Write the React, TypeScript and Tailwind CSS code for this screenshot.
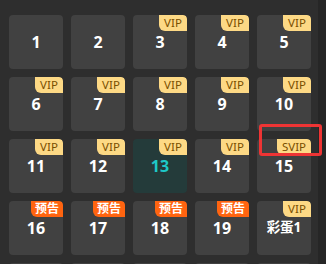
import React from "react";

type Cell = { label: string; badge?: "VIP" | "SVIP" | "预告"; active?: boolean; small?: boolean };

const cells: Cell[] = [
  { label: "1" },
  { label: "2" },
  { label: "3", badge: "VIP" },
  { label: "4", badge: "VIP" },
  { label: "5", badge: "VIP" },
  { label: "6", badge: "VIP" },
  { label: "7", badge: "VIP" },
  { label: "8", badge: "VIP" },
  { label: "9", badge: "VIP" },
  { label: "10", badge: "VIP" },
  { label: "11", badge: "VIP" },
  { label: "12", badge: "VIP" },
  { label: "13", badge: "VIP", active: true },
  { label: "14", badge: "VIP" },
  { label: "15", badge: "SVIP" },
  { label: "16", badge: "预告" },
  { label: "17", badge: "预告" },
  { label: "18", badge: "预告" },
  { label: "19", badge: "预告" },
  { label: "彩蛋1", badge: "VIP", small: true },
  { label: "" },
  { label: "" },
  { label: "" },
  { label: "" },
  { label: "" },
];

function Badge({ kind }: { kind: "VIP" | "SVIP" | "预告" }) {
  if (kind === "预告") {
    return (
      <div className="absolute top-0 right-0 h-[16px] w-[32px] rounded-tr-[4px] rounded-bl-[6px] bg-[#ff6410] text-white text-[12px] font-bold leading-[16px] text-center">
        预告
      </div>
    );
  }
  return (
    <div
      className={
        "absolute top-0 right-0 h-[16px] rounded-tr-[4px] rounded-bl-[6px] bg-[#fdd985] text-[#7a4f00] text-[11.5px] leading-[16px] text-center " +
        (kind === "SVIP" ? "w-[34px]" : "w-[28px]")
      }
    >
      {kind}
    </div>
  );
}

export default function App() {
  return (
    <div
      className="relative w-[326px] h-[264px] overflow-hidden bg-[#2e2e2e] flex"
      style={{ fontFamily: '"Noto Sans", "Noto Sans CJK SC", sans-serif' }}
    >
      <div className="flex-1 pl-[9px] pt-[15px]">
        <div className="grid grid-cols-[repeat(5,54px)] auto-rows-[54px] gap-[8px]">
          {cells.map((c, i) => (
            <div
              key={i}
              className={
                "relative rounded-[4px] flex items-center justify-center overflow-hidden " +
                (c.active ? "bg-[#243b3a]" : "bg-[#414141]")
              }
            >
              {c.badge && <Badge kind={c.badge} />}
              {c.label && (
                <span
                  className={
                    "font-bold leading-none " +
                    (c.small ? "text-[13.5px] " : "text-[16px] ") +
                    (c.active ? "text-[#1ec8c8]" : "text-white")
                  }
                >
                  {c.label}
                </span>
              )}
            </div>
          ))}
        </div>
      </div>
      <div className="w-[8px] h-full bg-[#262626]" />
      <div className="absolute left-[259px] top-[124px] w-[63px] h-[32px] border-[3px] border-[#ee3434] rounded-[3px]" />
    </div>
  );
}
